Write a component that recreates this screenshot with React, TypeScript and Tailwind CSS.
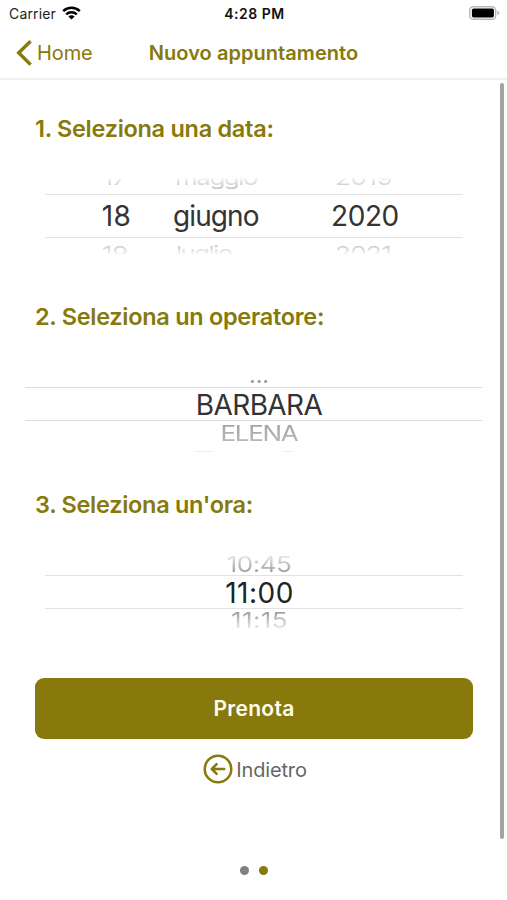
import { ReactNode } from 'react';

function StatusBar() {
    return (
        <div className="flex h-7 items-center justify-between pr-[7px] pl-[9px]">
            <div className="-mt-px flex w-40 items-center gap-[6px]">
                <span className="text-[14px] tracking-[0.15px] text-[#222]">Carrier</span>
                <svg width="19" height="14" viewBox="0 0 19 14" fill="none" stroke="#000" className="-mt-px">
                    <path d="M1.2 5.2a11.9 11.9 0 0 1 16.6 0" strokeWidth="2.5" />
                    <path d="M4.2 8.4a7.6 7.6 0 0 1 10.6 0" strokeWidth="2.3" />
                    <path d="M9.5 13.6 6.4 10.5a4.4 4.4 0 0 1 6.2 0z" fill="#000" stroke="none" />
                </svg>
            </div>
            <span className="-mt-[2px] text-[14px] font-semibold tracking-[0.5px] text-[#111]">
                4:28 PM
            </span>
            <div className="-mt-[2px] flex w-40 justify-end">
                <svg width="31" height="14" viewBox="0 0 31 14">
                    <rect x="0.7" y="0.7" width="26" height="12.6" rx="3.6" fill="#fff" stroke="#b8b8b8" strokeWidth="1.4" />
                    <rect x="2.9" y="2.6" width="22" height="8.8" rx="1.6" fill="#000" />
                    <path d="M28.4 4.8c1.3.5 2 1.3 2 2.2s-.7 1.7-2 2.2z" fill="#b8b8b8" />
                </svg>
            </div>
        </div>
    );
}

function NavBar() {
    return (
        <div className="grid h-[52px] grid-cols-[1fr_auto_1fr] items-center border-b-2 border-[#efefef] px-4 text-[#87790b]">
            <div className="flex items-center gap-[5px]">
                <svg width="16" height="26" viewBox="0 0 16 26" fill="none" stroke="currentColor" strokeWidth="3.4">
                    <path d="M14.6 1.2 2.7 12.7l11.9 11.9" />
                </svg>
                <span className="text-[20px] tracking-[-0.1px]">Home</span>
            </div>
            <h1 className="text-[20px] font-semibold tracking-[0.05px]">Nuovo appuntamento</h1>
        </div>
    );
}

function Step({ title, children }: { title: string; children: ReactNode }) {
    return (
        <section className="h-[188px] pt-[33px]">
            <h2 className="pl-[35px] text-[23.5px] leading-8 font-semibold tracking-[-0.29px] text-[#87790b]">
                {title}
            </h2>
            {children}
        </section>
    );
}

function DatePicker() {
    return (
        <div className="mt-[33px] mr-[44px] ml-[45px] text-[28px] text-[#333]">
            <div className="h-4 overflow-hidden text-[26px] text-[#aaa] [mask-image:linear-gradient(to_bottom,rgba(0,0,0,0.1),rgba(0,0,0,0.7)_60%)]">
                <div className="-mt-[18.5px] grid scale-y-[0.74] grid-cols-[128px_158px_132px] leading-9">
                    <span className="pr-[47px] text-right tracking-[-1px]">17</span>
                    <span className="pl-[2px] tracking-[-1.5px]">maggio</span>
                    <span className="pl-[4px] tracking-[-0.4px]">2019</span>
                </div>
            </div>
            <div className="grid h-11 grid-cols-[128px_158px_132px] items-center border-y-[1.5px] border-[#e2e2e2] leading-[43px]">
                <span className="pr-[42px] text-right tracking-[0.3px]">18</span>
                <span className="tracking-[-0.9px]">giugno</span>
                <span className="tracking-[-0.4px]">2020</span>
            </div>
            <div className="h-4 overflow-hidden text-[26px] text-[#aaa] [mask-image:linear-gradient(to_bottom,rgba(0,0,0,0.7)_40%,rgba(0,0,0,0.1))]">
                <div className="-mt-[3px] grid scale-y-[0.74] grid-cols-[128px_158px_132px] leading-9">
                    <span className="pr-[45px] text-right tracking-[-0.4px]">19</span>
                    <span className="pl-[3px] tracking-[-1.7px]">luglio</span>
                    <span className="pl-[4px] tracking-[-0.6px]">2021</span>
                </div>
            </div>
        </div>
    );
}

function OperatorPicker() {
    return (
        <div className="mt-[38px] mr-[25px] ml-[25px] pl-[11px] text-center text-[28px] text-[#333]">
            <div className="h-4 overflow-hidden text-[23px] text-[#999]">
                <div className="-mt-[14px] leading-9">...</div>
            </div>
            <div className="-ml-[11px] h-[34px] border-y-[1.5px] border-[#dcdcdc] pl-[11px] leading-[34px] tracking-[-0.6px]">
                BARBARA
            </div>
            <div className="h-[31px] overflow-hidden text-[26px] text-[#888] [mask-image:linear-gradient(to_bottom,rgba(0,0,0,0.8),rgba(0,0,0,0.5))]">
                <div className="-mt-[6px] scale-y-[0.84] leading-9 tracking-[-1.3px]">ELENA</div>
                <div className="mr-[190px] ml-auto flex w-24 justify-between">
                    <span className="h-px w-4 bg-[#ddd]" />
                    <span className="h-px w-2 bg-[#ddd]" />
                </div>
            </div>
        </div>
    );
}

function TimePicker() {
    return (
        <div className="mt-[34px] mr-[44px] ml-[45px] text-[28px] text-[#222]">
            <div className="h-5 overflow-hidden pl-[10px] text-center text-[26px] text-[#777] [mask-image:linear-gradient(to_bottom,rgba(0,0,0,0.15),rgba(0,0,0,0.8))]">
                <div className="-mt-[9px] scale-y-[0.84] leading-9 tracking-[-0.5px]">10:45</div>
            </div>
            <div className="h-[34px] border-y-[1.5px] border-[#e2e2e2] pl-[11px] text-center leading-[34px] tracking-[0.5px]">
                11:00
            </div>
            <div className="h-5 overflow-hidden pl-[11px] text-center text-[26px] text-[#777] [mask-image:linear-gradient(to_bottom,rgba(0,0,0,0.8),rgba(0,0,0,0.15))]">
                <div className="-mt-[7px] scale-y-[0.84] leading-9 tracking-[0.4px]">11:15</div>
            </div>
        </div>
    );
}

export default function App() {
    return (
        <div className="relative flex h-[900px] w-[507px] flex-col overflow-hidden bg-white font-['Inter',sans-serif]">
            <StatusBar />
            <NavBar />

            <main className="flex-1">
                <Step title="1. Seleziona una data:">
                    <DatePicker />
                </Step>
                <Step title="2. Seleziona un operatore:">
                    <OperatorPicker />
                </Step>
                <Step title="3. Seleziona un'ora:">
                    <TimePicker />
                </Step>

                <button className="mt-[34px] ml-[35px] block h-[61px] w-[438px] rounded-[9px] bg-[#87790b] text-[21px] font-semibold tracking-[0.3px] text-[#fffdf0]">
                    Prenota
                </button>
                <button className="mx-auto mt-[15px] flex h-[30px] items-center gap-[3px] pl-[3px] text-[20px] tracking-[-0.15px] text-[#666]">
                    <svg width="30" height="30" viewBox="0 0 30 30" fill="none" stroke="#87790b" strokeWidth="2.5" strokeLinecap="round">
                        <circle cx="15" cy="15" r="13.3" />
                        <path d="M21.2 15H9M13.6 10.2 8.8 15l4.8 4.8" strokeLinejoin="round" />
                    </svg>
                    <span className="pt-[2px]">Indietro</span>
                </button>
            </main>

            <div className="flex h-[61px] items-center justify-center gap-[10px] pt-px">
                <span className="size-[9px] rounded-full bg-[#808080]" />
                <span className="size-[9px] rounded-full bg-[#87790b]" />
            </div>

            {/* scroll indicator */}
            <div className="absolute top-[83px] right-[3px] h-[756px] w-1 rounded-full bg-[#a3a3a3]" />
        </div>
    );
}
